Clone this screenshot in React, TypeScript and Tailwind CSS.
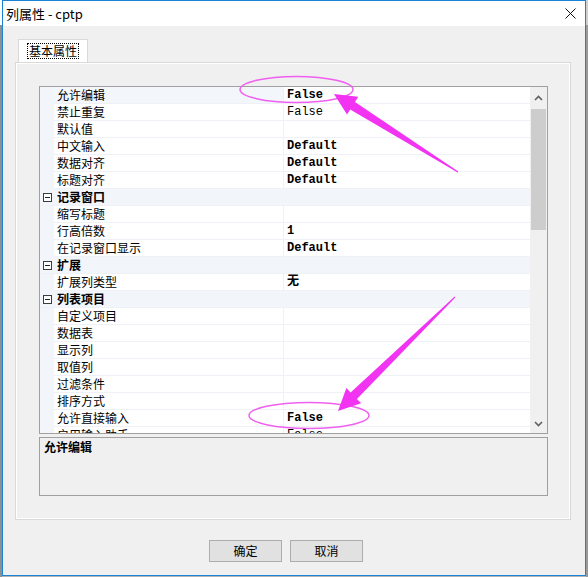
import type React from "react";

type Row = {
  name: string;
  value?: string;
  bold?: boolean;
  cat?: boolean;
  sel?: boolean;
};

const rows: Row[] = [
  { name: "允许编辑", value: "False", bold: true, sel: true },
  { name: "禁止重复", value: "False" },
  { name: "默认值" },
  { name: "中文输入", value: "Default", bold: true },
  { name: "数据对齐", value: "Default", bold: true },
  { name: "标题对齐", value: "Default", bold: true },
  { name: "记录窗口", cat: true },
  { name: "缩写标题" },
  { name: "行高倍数", value: "1", bold: true },
  { name: "在记录窗口显示", value: "Default", bold: true },
  { name: "扩展", cat: true },
  { name: "扩展列类型", value: "无", bold: true },
  { name: "列表项目", cat: true },
  { name: "自定义项目" },
  { name: "数据表" },
  { name: "显示列" },
  { name: "取值列" },
  { name: "过滤条件" },
  { name: "排序方式" },
  { name: "允许直接输入", value: "False", bold: true },
  { name: "启用输入助手", value: "False" },
];

const cjk = "font-['Noto_Sans_CJK_SC','Noto_Sans',sans-serif]";
const mono = "font-['Liberation_Mono','Noto_Sans_CJK_SC',monospace]";

// tapered arrow, thin at the tail and a triangle head at the tip
const arrow = (x1: number, y1: number, x2: number, y2: number) => {
  const dx = x2 - x1;
  const dy = y2 - y1;
  const len = Math.hypot(dx, dy);
  const ux = dx / len;
  const uy = dy / len;
  const nx = -uy;
  const ny = ux;
  const bx = x2 - ux * 22;
  const by = y2 - uy * 22;
  const p = (x: number, y: number) => `${x.toFixed(1)},${y.toFixed(1)}`;
  return [
    p(x1 + nx * 0.5, y1 + ny * 0.5),
    p(bx + nx * 4.5, by + ny * 4.5),
    p(bx + nx * 10.5, by + ny * 10.5),
    p(x2, y2),
    p(bx - nx * 10.5, by - ny * 10.5),
    p(bx - nx * 4.5, by - ny * 4.5),
    p(x1 - nx * 0.5, y1 - ny * 0.5),
  ].join(" ");
};

const GridRow: React.FC<{ row: Row }> = ({ row }) => {
  if (row.cat) {
    return (
      <div className="flex h-[17px] shrink-0 items-center bg-[#f2f5fa] border-b border-[#eef1f6]">
        <div className="w-[14px] flex justify-end pr-[2px]">
          <div className="w-[9px] h-[9px] border border-[#3c3c3c] bg-white flex items-center justify-center">
            <div className="w-[5px] h-px bg-[#222]" />
          </div>
        </div>
        <span className={`pl-[3px] text-[12px] leading-[16px] font-bold text-black ${cjk}`}>{row.name}</span>
      </div>
    );
  }
  return (
    <div className="flex h-[17px] shrink-0">
      <div className="w-[14px] bg-[#f2f5fa]" />
      <div
        className={`w-[230px] border-b border-r border-[#eef1f6] pl-[3px] text-[12px] leading-[16px] text-black whitespace-nowrap ${cjk} ${
          row.sel ? "bg-[#f3f6fb]" : "bg-white"
        }`}
      >
        {row.name}
      </div>
      <div
        className={`flex-1 bg-white border-b border-[#eef1f6] pl-[3px] text-[12px] leading-[16px] text-black ${mono} ${
          row.bold ? "font-bold" : ""
        }`}
      >
        {row.value}
      </div>
    </div>
  );
};

const App: React.FC = () => {
  return (
    <div className="relative w-[588px] h-[577px] flex bg-[#b4b4b4] overflow-hidden">
      <div className="w-[2px] flex flex-col">
        <div className="h-[25px] bg-white" />
        <div className="flex-1 bg-[#8f8f8f]" />
      </div>

      <div className="w-[584px] h-[576px] border border-[#1883d7] bg-[#f0f0f0] flex flex-col">
        {/* title bar */}
        <div className="h-[25px] bg-white flex items-center justify-between pl-[3px] pr-[9px]">
          <span className={`text-[13px] text-black ${cjk}`}>列属性 - cptp</span>
          <svg width="11" height="11" viewBox="0 0 11 11">
            <path d="M0.5 0.5 L10.5 10.5 M10.5 0.5 L0.5 10.5" stroke="#111" strokeWidth="1" />
          </svg>
        </div>

        {/* tab header */}
        <div className="mt-[13px] ml-[15px] w-[70px] h-[23px] bg-white border-t border-l border-r border-[#d9d9d9] flex items-center justify-center">
          <span className={`border border-dotted border-black px-[1px] text-[12px] leading-[14px] text-black ${cjk}`}>
            基本属性
          </span>
        </div>

        {/* tab panel */}
        <div className="ml-[12px] w-[556px] h-[458px] border border-[#d9d9d9] shadow-[inset_0_0_0_1px_#ffffff] pl-[23px] pt-[23px] flex flex-col">
          {/* property grid */}
          <div className="w-[509px] h-[348px] border border-[#a0a0a0] flex bg-white">
            <div className="flex-1 flex flex-col overflow-hidden">
              {rows.map((r, i) => (
                <GridRow key={i} row={r} />
              ))}
            </div>
            <div className="w-[17px] bg-[#f0f0f0] flex flex-col items-center">
              <div className="h-[22px] flex items-center justify-center">
                <svg width="9" height="6" viewBox="0 0 9 6">
                  <path d="M1 5 L4.5 1.5 L8 5" fill="none" stroke="#606060" strokeWidth="1.6" />
                </svg>
              </div>
              <div className="w-[15px] h-[121px] bg-[#cdcdcd]" />
              <div className="flex-1" />
              <div className="h-[18px] flex items-center justify-center">
                <svg width="9" height="6" viewBox="0 0 9 6">
                  <path d="M1 1 L4.5 4.5 L8 1" fill="none" stroke="#606060" strokeWidth="1.6" />
                </svg>
              </div>
            </div>
          </div>

          {/* description */}
          <div className="mt-[3px] w-[509px] h-[59px] border border-[#a0a0a0] bg-[#f0f0f0] pl-[4px] pt-[2px]">
            <div className={`text-[12px] leading-[14px] font-bold text-black ${cjk}`}>允许编辑</div>
          </div>
        </div>

        {/* buttons */}
        <div className="mt-[20px] ml-[206px] flex gap-[8px]">
          <button className={`w-[73px] h-[22px] bg-[#e1e1e1] border border-[#adadad] text-[12px] text-black ${cjk}`}>
            确定
          </button>
          <button className={`w-[73px] h-[22px] bg-[#e1e1e1] border border-[#adadad] text-[12px] text-black ${cjk}`}>
            取消
          </button>
        </div>
      </div>

      <div className="w-[2px] flex flex-col">
        <div className="h-[25px] bg-[#d0d0d0]" />
        <div className="flex-1 bg-[#9a9a9a]" />
      </div>

      {/* annotations */}
      <svg className="absolute left-0 top-0 pointer-events-none" width="588" height="577" viewBox="0 0 588 577">
        <ellipse cx="296.5" cy="89.5" rx="56.5" ry="13" fill="none" stroke="#f060f0" strokeWidth="1.5" />
        <polygon points={arrow(458, 172, 334, 94)} fill="#f233f2" />
        <ellipse cx="309" cy="415.5" rx="60" ry="13" fill="none" stroke="#f060f0" strokeWidth="1.5" />
        <polygon points={arrow(455, 297, 338, 411)} fill="#f233f2" />
      </svg>
    </div>
  );
};

export default App;
